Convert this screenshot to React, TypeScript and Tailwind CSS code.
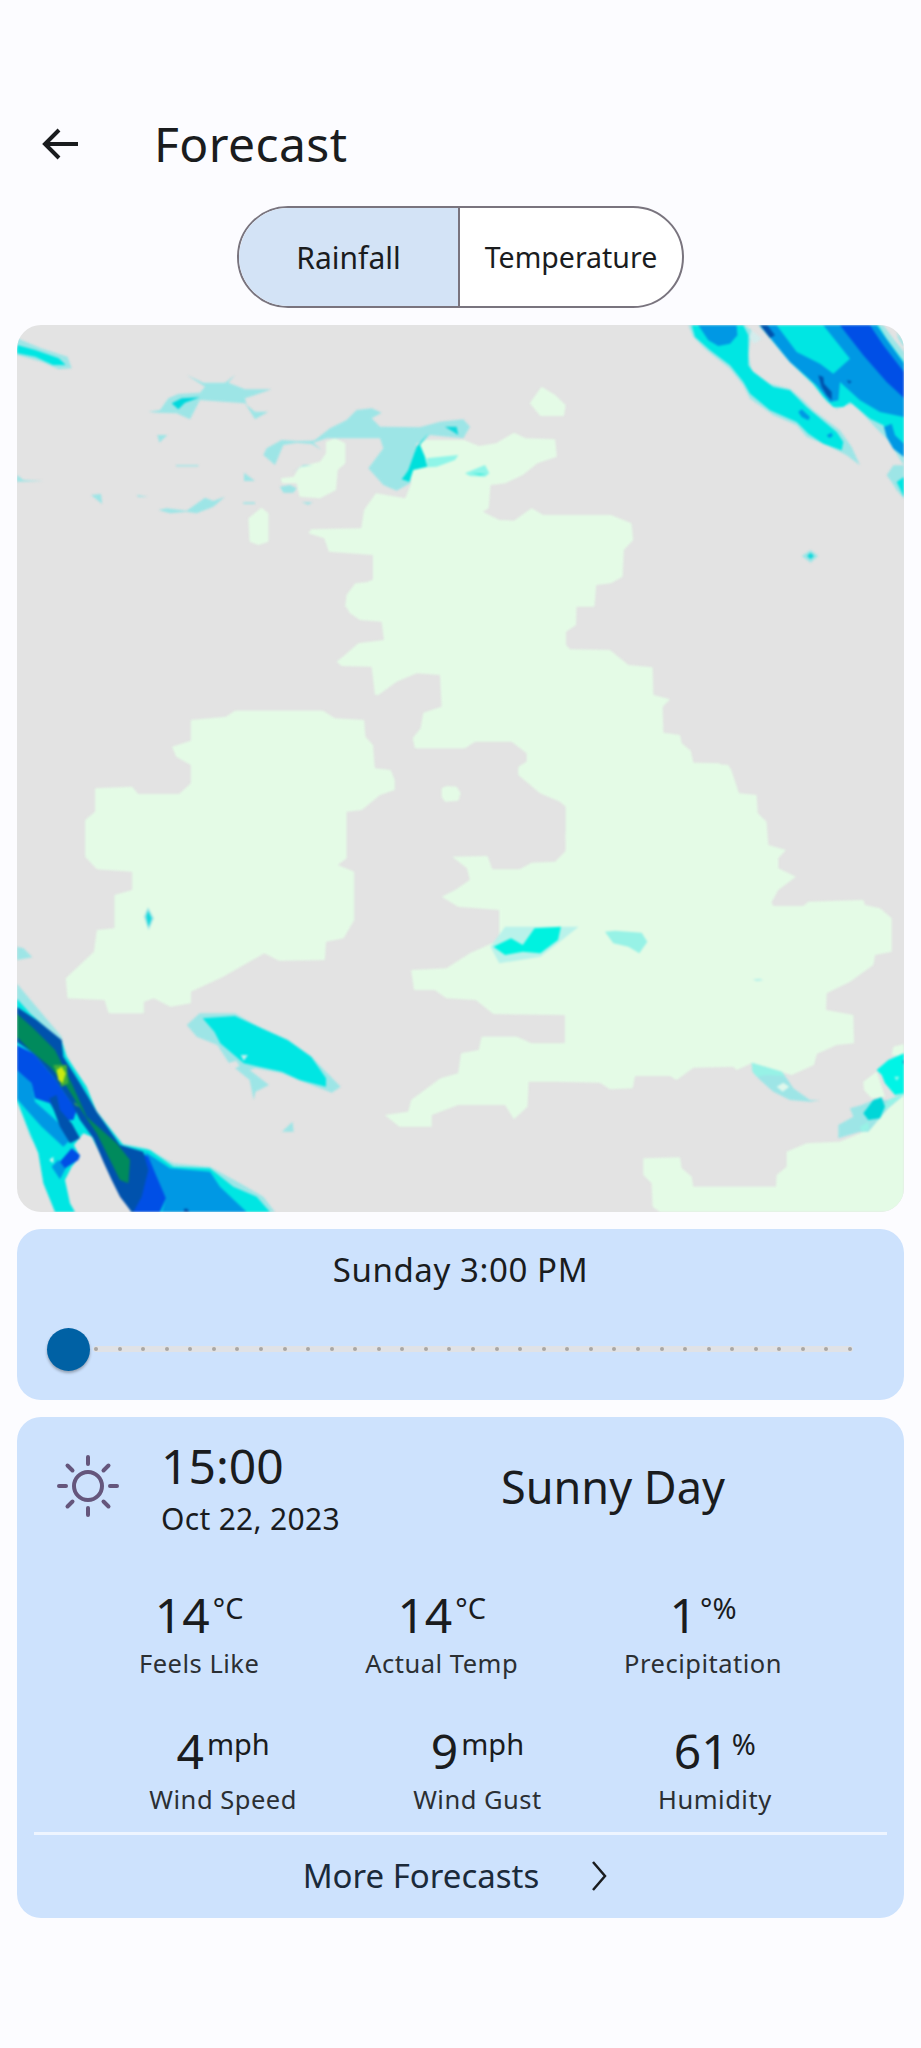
import React from "react";

const PALE = "#9de5e6";
const CYAN = "#00e6e3";
const MID = "#0098e4";
const BLUE = "#004fe6";
const DARK = "#0052ad";
const GREEN = "#008a5c";
const LAND = "#e4fbe6";
const GRAY = "#e3e3e3";

type S = [string, string];

const landU: string[] = [
  "555,365 570,355 588,370 588,430 575,450 572,510 545,535 510,530 505,490 480,490 478,475 500,470 510,440 545,425 555,400",
  "720,360 790,360 815,378 845,370 875,338 895,355 945,358 948,410 915,430 890,465 860,490 835,495 832,565 822,575 850,600 875,602 905,565 925,585 1040,585 1075,610 1078,660 1062,690 1060,770 1040,790 1015,795 1012,860 600,860 588,860 590,825 605,790 635,785 635,705 560,695 552,655 525,640 530,628 615,625 620,570 640,520 690,535 700,490 700,430",
  "325,1200 385,1190 400,1172 550,1172 570,1195 620,1200 622,1250 635,1275 638,1345 665,1350 672,1380 672,1410 647,1425 616,1470 590,1475 590,1615 575,1635 603,1655 603,1800 585,1855 555,1865 553,1920 475,1922 450,1900 380,1970 325,2015 325,2050 290,2060 262,2035 245,2045 245,2080 185,2080 178,2040 115,2035 112,1975 160,1895 165,1830 195,1825 195,1725 225,1710 225,1655 165,1648 145,1610 145,1500 162,1475 162,1405 225,1400 235,1422 305,1422 325,1390",
  "293,1280 325,1262 330,1340 300,1310",
  "423,595 445,563 457,580 457,665 440,675 425,665",
  "902,250 922,200 945,225 963,255 960,288 920,288",
  "1200,1330 1240,1335 1245,1350 1258,1420 1288,1425 1290,1480 1305,1505 1308,1575 1338,1590 1325,1615 1325,1645 1355,1670 1325,1710 1310,1758 1250,1760 1200,1760",
  "963,1540 1250,1540 1250,1760 963,1760",
  "965,1540 965,1590 945,1625 905,1628 885,1648 838,1648 830,1608 770,1610 795,1645 800,1680 775,1710 752,1730 780,1760 850,1770 850,1860 800,1900 760,1945 700,1950 705,2010 740,2010 760,2035 810,2040 840,2082 965,2085",
  "962,2170 905,2170 880,2150 820,2150 815,2190 785,2200 780,2260 750,2275 700,2340 695,2375 655,2385 680,2420 735,2420 735,2385 780,2355 860,2355 875,2398 898,2360 900,2285 1020,2285 1020,2170",
];

const landZ1: string[] = [
  "215,0 165,25 160,45 135,75 150,100 180,120 245,125 252,180 175,190 135,225 110,245 125,258 215,260 225,345 235,345 290,305 350,280 420,285 425,380 370,398 362,445 338,475 345,505 495,505 525,485 635,485 680,520 680,545 655,560 655,585 720,640 780,665 797,680 797,780 1260,780 1260,550 1180,548 1172,512 1145,490 1140,465 1090,458 1088,380 1110,358 1060,345 1058,262 985,255 930,210 810,208 798,195 798,155 828,135 830,60 845,60 870,75 888,15 935,0",
  "425,625 440,618 470,620 482,640 475,662 435,665 425,650",
];

const landZ2: string[] = [
  "0,0 630,0 640,18 730,18 745,5 910,0 915,15 960,25 995,55 995,155 945,165 940,195 870,245 800,280 798,330 880,345 882,430 830,435 770,462 762,495 695,525 575,490 530,510 520,500 400,503 350,540 330,528 225,528 218,565 150,568 120,548 0,545 0,432 15,430 15,345 0,345",
  "250,775 360,772 365,805 395,830 400,860 648,860 650,825 680,800 680,755 740,730 840,725 925,690 985,625 1032,585 1032,936 300,936 278,920 275,850 250,825",
  "910,545 950,515 975,590 935,595 912,570",
  "1000,440 1032,432 1032,470 995,465",
];

const unified: S[] = [
  ["29,55 70,85 115,110 122,145 100,148 70,125 29,105", PALE],
  ["29,75 60,90 100,115 112,135 90,135 60,110 29,100", CYAN],
  ["29,465 40,480 75,483 29,485", PALE],
  ["155,525 172,522 174,552", PALE],
  ["1365,708 1380,690 1393,708 1380,728", PALE],
  ["1374,708 1380,698 1386,708 1380,718", "#10d8dc"],
  ["245,1790 252,1762 262,1795 253,1830", PALE],
  ["249,1790 252,1772 258,1795 253,1820", "#10d8dc"],
  ["29,1880 40,1885 55,1912 29,1920", PALE],
  ["318,2115 340,2080 400,2080 440,2120 530,2210 580,2300 565,2318 515,2285 480,2260 435,2245 425,2250 458,2295 435,2315 432,2340 425,2280 390,2230 370,2175 335,2150", PALE],
  ["345,2095 400,2088 440,2120 490,2160 530,2210 555,2275 555,2300 510,2280 480,2255 415,2230 375,2170 365,2135", CYAN],
  ["410,2205 422,2205 415,2222", "#c5eeee"],
  ["388,2230 402,2222 408,2238 398,2246", GRAY],
  ["480,2435 498,2405 500,2435", PALE],
  ["835,1880 860,1820 985,1820 950,1870 920,1910 850,1930", "#b9f2ea"],
  ["840,1880 870,1855 890,1875 910,1825 955,1820 950,1860 920,1900 890,1895 860,1905", "#00f2e0"],
];

const z7: S[] = [
  ["25,10 195,10 215,25 205,100 215,145 270,185 330,200 370,235 400,265 480,325 515,375 540,430 500,400 440,370 380,345 350,310 280,280 210,230 190,190 150,140 80,85 40,45", PALE],
  ["35,10 190,10 205,40 205,130 220,150 280,195 330,205 380,255 470,330 490,360 485,385 430,365 385,335 350,300 270,265 210,215 190,180 150,130 90,85 45,45", CYAN],
  ["55,10 170,10 172,40 150,65 115,72 85,55", MID],
  ["355,270 365,262 390,285 385,295 365,285", MID],
  ["440,340 455,332 458,342 448,348", MID],
  ["215,25 245,50 222,65 208,45", "#d3ecec"],
  ["235,10 610,10 640,50 672,90 672,430 620,350 590,320 520,245 500,250 470,262 440,240 400,190 320,110", PALE],
  ["650,30 672,60 672,75 655,50", PALE],
  ["240,10 595,10 620,50 672,120 672,400 640,370 610,310 570,290 510,240 490,255 460,255 430,225 400,185 330,120", CYAN],
  ["240,10 290,10 350,90 420,125 460,155 510,110 470,60 430,10 590,10 672,125 672,285 600,270 540,235 480,180 475,235 450,240 410,190 330,120", MID],
  ["480,10 570,10 610,70 672,150 672,228 620,180 550,100", BLUE],
  ["240,10 262,10 285,40 270,48", DARK],
  ["415,160 430,165 432,185 455,210 455,235 440,220 425,195", DARK],
  ["500,175 515,178 508,185", DARK],
  ["612,315 635,305 645,340 672,365 672,405 640,380 620,345", MID],
  ["620,460 640,430 672,430 672,530 650,505 635,480", PALE],
  ["650,480 672,465 672,525", CYAN],
];

const z8: S[] = [
  ["170,15 220,38 285,38 315,15 295,38 345,58 425,58 390,70 345,85 350,105 375,125 415,125 375,148 345,100 280,95 210,90 180,148 140,130 85,128 55,125 90,120 115,85 145,72 210,68 225,50", PALE],
  ["125,100 155,85 210,82 165,98 145,118", "#00d8dc"],
  ["555,210 600,175 650,150 680,120 725,115 755,128 725,145 750,170 870,172 930,155 1000,148 1020,170 1000,205 900,195 880,215 860,220 840,340 800,362 760,345 715,295 760,235 750,205 700,205 640,205 590,205 550,218 575,240 545,222 500,218 460,225 435,285 400,255 410,235 455,210 500,213 545,212", PALE],
  ["835,300 860,230 895,190 870,225 885,260 892,290 850,300 838,335 815,328 825,315", "#00e0dc"],
  ["890,265 985,255 975,270 920,290 892,292", "#8ff5e8"],
  ["1005,310 1065,285 1078,310 1065,320 1020,318", "#8ff5e8"],
  ["1025,310 1070,312 1050,316", "#30ecdc"],
  ["945,170 980,170 985,195", "#10d8dc"],
  ["82,195 112,195 88,218", PALE],
  ["138,285 205,285 205,289 138,289", PALE],
  ["342,308 375,333 342,333", PALE],
  ["450,350 480,345 500,355 490,368 460,368", PALE],
  ["20,375 55,380 25,381", PALE],
  ["85,420 110,415 170,422 225,383 250,393 285,380 250,410 200,430 170,425 120,430", PALE],
  ["340,397 375,397 375,402 340,402", PALE],
  ["515,397 548,397 535,404", PALE],
  ["485,310 520,285 548,285 515,290", PALE],
];

const z2: S[] = [
  ["135,95 165,92 245,98 262,125 238,160 205,140 160,130", "#97f2e6"],
  ["578,238 600,236 610,241 590,244", "#b9f2ea"],
  ["575,488 630,505 665,515 680,535 700,565 750,600 780,600 750,605 690,600 640,575 600,540 578,515", PALE],
  ["575,488 630,505 665,515 675,528 620,525 590,530 578,515", "#97f2e6"],
  ["650,560 670,548 688,560 668,575", "#dff7ec"],
  ["835,675 880,650 870,625 905,615 940,600 985,600 1032,578 1032,585 985,625 925,695 900,695 835,715", PALE],
  ["900,680 925,665 928,688 905,696", "#97f2e6"],
  ["985,600 1032,578 1032,585 985,622 965,635", "#97f2e6"],
  ["910,640 940,600 965,592 975,620 960,655 925,660", "#00d6d8"],
  ["950,510 985,480 1032,460 1032,580 1005,585 975,550 965,525", "#00f4e6"],
  ["1003,530 1018,530 1010,542", "#9cf5ea"],
  ["1028,482 1032,482 1032,494", DARK],
];

const z6: S[] = [
  ["50,40 100,100 185,200 200,255 290,420 365,520 440,535 520,580 630,590 720,640 790,680 825,726 175,726 150,640 120,550 90,500 50,390", PALE],
  ["50,85 90,130 185,215 200,260 260,350 290,425 370,525 450,540 520,590 630,595 700,650 770,680 810,726 165,726 130,640 115,550 90,490 50,390", CYAN],
  ["250,490 222,525 240,560 215,590 195,630 210,700 225,726 395,726 350,650 310,570 275,500", GRAY],
  ["50,300 95,340 105,395 150,435 220,500 190,530 125,470 80,420 50,385", MID],
  ["155,590 175,570 200,590 180,628", MID],
  ["50,225 100,250 160,320 230,420 220,450 180,450 150,400 105,385 95,340 50,300", BLUE],
  ["180,575 215,535 240,555 235,570 195,595", BLUE],
  ["148,570 160,560 160,580", "#d8f5f0"],
  ["148,385 170,375 180,420 215,460 240,505 210,520 180,470 165,430", DARK],
  ["435,545 510,595 630,605 660,650 740,726 485,726 498,685 465,620", MID],
  ["410,540 445,560 470,620 498,685 480,726 395,726 365,680 390,670 395,600", BLUE],
  ["50,110 110,150 185,210 190,260 240,340 270,390 290,425 360,525 430,545 445,600 425,680 400,726 395,726 360,680 335,630 310,575 280,505 240,450 215,400 160,320 100,250 50,215", DARK],
  ["50,130 100,175 165,240 215,340 260,440 350,520 390,570 385,640 360,630 330,570 290,490 250,430 200,350 150,290 90,240 50,200", GREEN],
  ["160,285 200,285 205,340 185,350", "#3fae3a"],
  ["170,300 185,290 197,310 188,340 175,330", "#c9ea10"],
  ["213,365 222,395 240,412 225,405", "#3fae3a"],
  ["552,716 562,716 568,726 552,726", DARK],
];

function Group({ m, shapes }: { m: string; shapes: S[] }) {
  return (
    <g transform={m}>
      {shapes.map(([p, f], i) => (
        <polygon key={i} points={p} fill={f} />
      ))}
    </g>
  );
}

const L = (a: string[]): S[] => a.map((p) => [p, LAND]);

function RainMap() {
  const u = "matrix(0.58737,0,0,0.33333,0,320)";
  const mz1 = "matrix(0.33333,0,0,0.33333,300,580)";
  const mz2 = "matrix(0.33333,0,0,0.33333,560,900)";
  return (
    <div className="h-[887px] w-full overflow-hidden rounded-[24px] bg-[#e3e3e3]">
      <svg viewBox="17 325 887 887" className="block h-full w-full blur-[0.8px]">
        <Group m={u} shapes={L(landU)} />
        <Group m={mz1} shapes={L(landZ1)} />
        <Group m={mz2} shapes={L(landZ2)} />
        <Group m={u} shapes={unified} />
        <Group m="matrix(0.33333,0,0,0.33333,130,370)" shapes={z8} />
        <Group m="matrix(0.33333,0,0,0.33333,680,322)" shapes={z7} />
        <Group m={mz2} shapes={z2} />
        <Group m="matrix(0.33333,0,0,0.33333,0,970)" shapes={z6} />
      </svg>
    </div>
  );
}

function Stat({ v, u, l }: { v: string; u: string; l: string }) {
  return (
    <div className="flex flex-col items-center">
      <div className="flex h-[54px] items-start pt-[4px] leading-none">
        <span className="text-[48px] leading-[50px] text-[#1a1c1e]">{v}</span>
        <span className="ml-[3px] text-[29px] leading-[36px] text-[#1a1c1e]">{u}</span>
      </div>
      <div className="mt-[7px] text-[25.500px] leading-[32px] tracking-[0.5px] text-[#2b2f33]">{l}</div>
    </div>
  );
}

export default function App() {
  const dots = Array.from({ length: 33 });
  return (
    <div className="min-h-[2048px] bg-[#fcfcff] px-[17px] font-['Noto_Sans',sans-serif] text-[#1a1c1e]">
      <header className="flex h-[206px] items-start pt-[112px]">
        <div className="flex h-[64px] w-full items-center">
          <svg viewBox="0 0 36 32" className="ml-[25px] h-[32px] w-[36px]" fill="none" stroke="#1a1c1e" strokeWidth="4">
            <path d="M36 16H3M17 2 3 16l14 14" />
          </svg>
          <h1 className="ml-[76px] text-[48px] font-normal leading-none tracking-[0.4px]">Forecast</h1>
        </div>
      </header>

      <div className="mx-auto flex h-[102px] w-[447px] overflow-hidden rounded-full border-2 border-[#79747e] bg-white">
        <div className="flex w-[221px] items-center justify-center border-r-2 border-[#79747e] bg-[#d3e3f6] text-[30px]">Rainfall</div>
        <div className="flex flex-1 items-center justify-center text-[28.500px]">Temperature</div>
      </div>

      <div className="mt-[17px]">
        <RainMap />
      </div>

      <section className="mt-[17px] h-[171px] rounded-[24px] bg-[#cde2fd] pt-[20px]">
        <div className="text-center text-[33px] leading-[42px] tracking-[0.6px]">Sunday 3:00 PM</div>
        <div className="relative mt-[36px] flex h-[44px] items-center pl-[30px]">
          <div className="h-[43px] w-[43px] rounded-full bg-[#0061a4] shadow-[0_2px_3px_rgba(0,0,0,0.3)]" />
          <div className="ml-[3px] flex h-[6px] w-[760px] items-center justify-between rounded-full bg-[#e0e2e6] px-[1px]">
            {dots.map((_, i) => (
              <span key={i} className="h-[4px] w-[4px] rounded-full bg-[#a9a7a5]" />
            ))}
          </div>
        </div>
      </section>

      <section className="mt-[17px] h-[501px] rounded-[24px] bg-[#cde2fd]">
        <div className="flex h-[138px] items-center">
          <svg viewBox="0 0 64 64" className="ml-[39px] h-[64px] w-[64px]" fill="none" stroke="#65567c" strokeWidth="4" strokeLinecap="round">
            <circle cx="32" cy="32" r="14" />
            <path d="M32 3v7M32 54v7M3 32h7M54 32h7M11.5 11.5l5 5M47.500 47.500l5 5M11.500 52.500l5-5M47.500 16.500l5-5" />
          </svg>
          <div className="ml-[41px] w-[260px] pt-[6px]">
            <div className="text-[48px] leading-[54px]">15:00</div>
            <div className="mt-[6px] text-[30px] leading-[40px] tracking-[0.3px]">Oct 22, 2023</div>
          </div>
          <div className="ml-[80px] pt-[2px] text-[45px] leading-[56px]">Sunny Day</div>
        </div>
        <div className="flex justify-evenly px-4 pt-[31px]">
          <Stat v="14" u="°C" l="Feels Like" />
          <Stat v="14" u="°C" l="Actual Temp" />
          <Stat v="1" u="°%" l="Precipitation" />
        </div>
        <div className="flex justify-evenly px-4 pt-[43px]">
          <Stat v="4" u="mph" l="Wind Speed" />
          <Stat v="9" u="mph" l="Wind Gust" />
          <Stat v="61" u="%" l="Humidity" />
        </div>
        <div className="mx-[17px] mt-[17px] h-[3px] bg-[#eef5ff]" />
        <div className="flex h-[82px] items-center justify-center pr-[9px] text-[#1b2a3a]">
          <span className="text-[33px]">More Forecasts</span>
          <svg viewBox="0 0 20 32" className="ml-[50px] h-[32px] w-[20px]" fill="none" stroke="#1a1c1e" strokeWidth="2.500">
            <path d="M4 2l12 14L4 30" />
          </svg>
        </div>
      </section>
    </div>
  );
}
